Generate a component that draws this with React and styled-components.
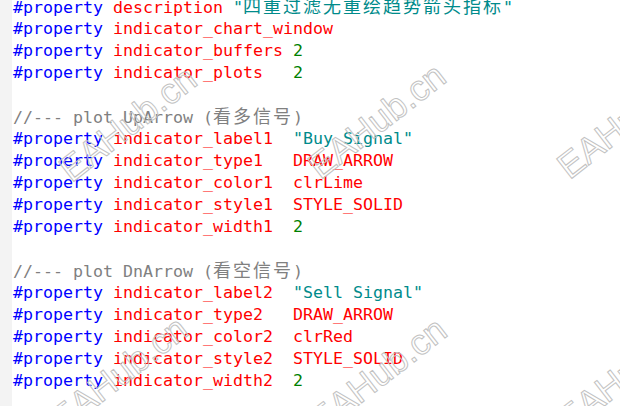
import styled, { createGlobalStyle } from 'styled-components'

const Global = createGlobalStyle`
   html, body {
      margin: 0;
      padding: 0;
      background: #ffffff;
   }
   body {
      width: 620px;
      height: 406px;
      overflow: hidden;
   }
`

const tones = {
   kw: '#0000ff',
   name: '#ff0000',
   num: '#008000',
   str: '#008b8b',
   note: '#808080',
}

const Page = styled.div`
   position: relative;
   display: flex;
   width: 620px;
   height: 406px;
   overflow: hidden;
   background: #ffffff;
`

const Gutter = styled.div`
   flex: 0 0 12px;
   background: #f3f3f3;
`

const Code = styled.div`
   flex: 1;
   display: flex;
   flex-direction: column;
   margin-top: -4px;
   padding-left: 1px;
   font-family: 'DejaVu Sans Mono', 'Liberation Mono', monospace;
   font-size: 16.61px;
   white-space: pre;
`

const Line = styled.div`
   height: 22px;
   line-height: 22px;
`

const Tok = styled.span`
   color: ${(p) => tones[p.$tone]};
`

// 한자 한 글자가 두 칸(20px)을 차지한다
const Cjk = styled.span`
   font-family: 'Noto Sans CJK SC', sans-serif;
   font-size: 18px;
   letter-spacing: 2px;
   line-height: 1;
`

const Mark = styled.div`
   position: absolute;
   left: ${(p) => p.$x}px;
   top: ${(p) => p.$y}px;
   transform: translate(-50%, -50%) rotate(-38deg);
   font-family: 'Liberation Sans', Arial, sans-serif;
   font-size: 36px;
   color: transparent;
   -webkit-text-stroke: 1px #c2c2c2;
   white-space: nowrap;
   pointer-events: none;
`

const Prop = ({ name, gap = ' ', value, tone }) => (
   <Line>
      <Tok $tone="kw">#property</Tok> <Tok $tone="name">{name}</Tok>
      {value !== undefined && (
         <>
            {gap}
            <Tok $tone={tone}>{value}</Tok>
         </>
      )}
   </Line>
)

const Comment = ({ head, cjk }) => (
   <Line>
      <Tok $tone="note">
         {head}(<Cjk>{cjk}</Cjk>)
      </Tok>
   </Line>
)

const marks = [
   [128, 124],
   [377, 121],
   [626, 121],
   [119, 374],
   [378, 375],
   [626, 374],
]

function App() {
   return (
      <Page>
         <Global />
         <Gutter />
         <Code>
            <Line>
               <Tok $tone="kw">#property</Tok> <Tok $tone="name">description</Tok>{' '}
               <Tok $tone="str">
                  "<Cjk>四重过滤无重绘趋势箭头指标</Cjk>"
               </Tok>
            </Line>
            <Prop name="indicator_chart_window" />
            <Prop name="indicator_buffers" value="2" tone="num" />
            <Prop name="indicator_plots" gap="   " value="2" tone="num" />
            <Line />
            <Comment head="//--- plot UpArrow " cjk="看多信号" />
            <Prop name="indicator_label1" gap="  " value={'"Buy Signal"'} tone="str" />
            <Prop name="indicator_type1" gap="   " value="DRAW_ARROW" tone="name" />
            <Prop name="indicator_color1" gap="  " value="clrLime" tone="name" />
            <Prop name="indicator_style1" gap="  " value="STYLE_SOLID" tone="name" />
            <Prop name="indicator_width1" gap="  " value="2" tone="num" />
            <Line />
            <Comment head="//--- plot DnArrow " cjk="看空信号" />
            <Prop name="indicator_label2" gap="  " value={'"Sell Signal"'} tone="str" />
            <Prop name="indicator_type2" gap="   " value="DRAW_ARROW" tone="name" />
            <Prop name="indicator_color2" gap="  " value="clrRed" tone="name" />
            <Prop name="indicator_style2" gap="  " value="STYLE_SOLID" tone="name" />
            <Prop name="indicator_width2" gap="  " value="2" tone="num" />
         </Code>
         {marks.map(([x, y], i) => (
            <Mark key={i} $x={x} $y={y}>
               EAHub.cn
            </Mark>
         ))}
      </Page>
   )
}

export default App
